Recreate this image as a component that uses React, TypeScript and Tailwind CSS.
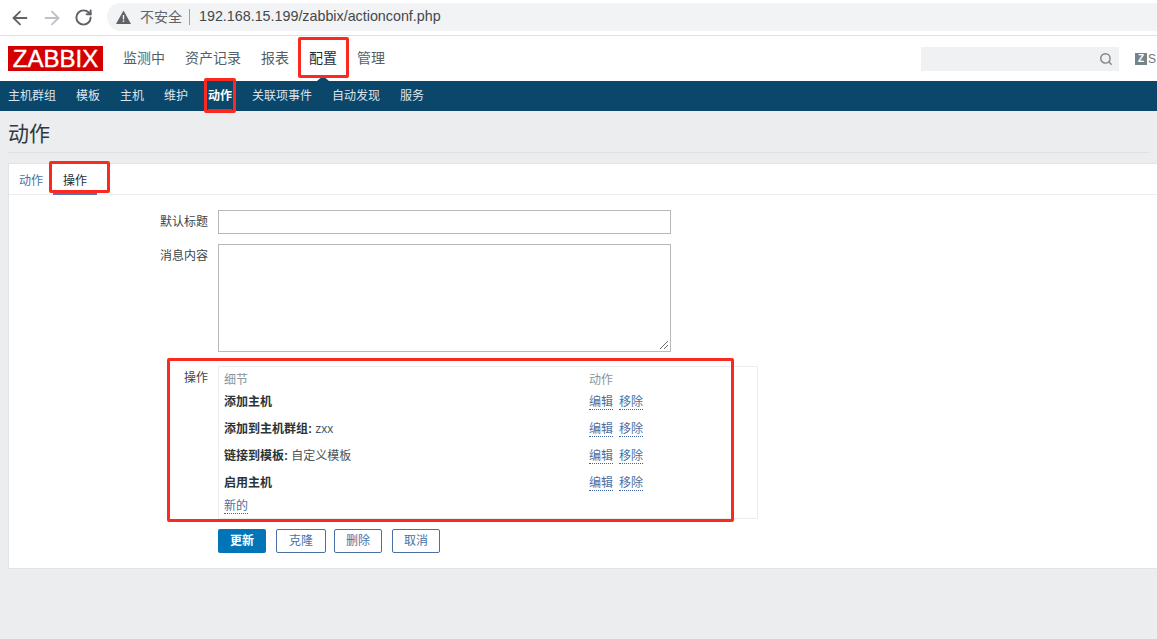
import React from "react";
import { ArrowLeft, ArrowRight, RotateCw, Search } from "lucide-react";

const font = "font-['Liberation_Sans','Noto_Sans_CJK_SC',sans-serif]";

const mainNav = [
  { label: "监测中", w: "w-[42px]" },
  { label: "资产记录", w: "w-[56px]" },
  { label: "报表", w: "w-[28px]" },
  { label: "配置", w: "w-[28px]", active: true },
  { label: "管理", w: "w-[28px]" },
];

const subNav = ["主机群组", "模板", "主机", "维护", "动作", "关联项事件", "自动发现", "服务"];

const ops = [
  { bold: "添加主机", rest: "" },
  { bold: "添加到主机群组:", rest: " zxx" },
  { bold: "链接到模板:", rest: " 自定义模板" },
  { bold: "启用主机", rest: "" },
];

function Link({ children }: { children: React.ReactNode }) {
  return (
    <a className="text-[#4a6fa5] border-b border-dotted border-[#3f62a0] leading-[13px] cursor-pointer">
      {children}
    </a>
  );
}

function RedBox({ className }: { className: string }) {
  return <div className={`absolute border-[3px] border-[#fb2a20] rounded-[2px] pointer-events-none ${className}`} />;
}

export default function App() {
  return (
    <div className={`${font} relative w-[1157px] h-[639px] overflow-hidden bg-[#ebedef] text-[12px] text-[#1f2c33]`}>
      {/* browser bar */}
      <div className="h-[36px] bg-white border-b border-[#dfe1e3] flex items-center">
        <div className="w-[107px] pl-[9px] flex items-center">
          <ArrowLeft size={22} strokeWidth={2} className="text-[#5f6368]" />
          <ArrowRight size={22} strokeWidth={2} className="text-[#bdc1c6] ml-[10px]" />
          <RotateCw size={19} strokeWidth={2.5} className="text-[#5f6368] ml-[11px]" />
        </div>
        <div className="flex-1 h-[28px] mb-px bg-[#f1f3f4] rounded-l-[14px] flex items-center pl-[9px]">
          <svg width="15" height="14" viewBox="0 0 15 14">
            <path d="M7.5 0.5 15 14H0Z" fill="#5f6368" />
            <path d="M6.8 5h1.4v4.6H6.8ZM6.8 10.6h1.4V12H6.8Z" fill="#f1f3f4" />
          </svg>
          <span className="ml-[9px] text-[14px] text-[#5f6368]">不安全</span>
          <span className="ml-[7px] w-px h-[16px] bg-[#9aa0a6]" />
          <span className="ml-[9px] text-[14.3px] text-[#44484c]">192.168.15.199/zabbix/actionconf.php</span>
        </div>
      </div>

      {/* header */}
      <div className="h-[45px] bg-white flex items-center pl-[8px]">
        <div className="w-[95px] h-[25px] bg-[#d40000] text-white text-[24px] leading-[25px] text-center [-webkit-text-stroke:0.4px_white]">
          ZABBIX
        </div>
        <nav className="ml-[20px] flex gap-[20px] text-[14px] text-[#555f66]">
          {mainNav.map((item) => (
            <span key={item.label} className={`${item.w} whitespace-nowrap ${item.active ? "text-[#1f2c33]" : ""}`}>
              {item.label}
            </span>
          ))}
        </nav>
        <div className="ml-auto flex items-center">
          <div className="w-[198px] h-[24px] bg-[#f0f1f2] flex items-center justify-end pr-[6px]">
            <Search size={14} strokeWidth={2.4} className="text-[#7b868c]" />
          </div>
          <div className="ml-[16px] w-[12px] h-[12px] bg-[#76838a] text-white text-[10px] leading-[12px] font-bold text-center">Z</div>
          <span className="ml-[1px] text-[#6b767c] text-[12px] w-[9px] overflow-hidden">S</span>
        </div>
      </div>

      {/* sub nav */}
      <div className="relative h-[30px] bg-[#0b466b] flex items-center pl-[8px] gap-[20px] text-[#dbe5ec]">
        <span className="absolute left-[317px] -top-[5px] w-0 h-0 border-x-[6px] border-x-transparent border-b-[5px] border-b-[#0b466b]" />
        {subNav.map((s) => (
          <span
            key={s}
            className={`h-full flex items-center whitespace-nowrap ${
              s === "动作" ? "text-white font-bold border-y-2 border-t-transparent border-b-[#0a7cc4]" : ""
            }`}
          >
            {s}
          </span>
        ))}
      </div>

      {/* title */}
      <div className="mx-[8px] h-[42px] border-b border-[#dde1e3] flex items-center">
        <h1 className="text-[21px] text-[#30393e] mt-[4px]">动作</h1>
      </div>

      {/* card */}
      <div className="ml-[8px] mt-[10px] h-[406px] bg-white border border-[#dfe4e7] border-r-0">
        <div className="h-[31px] border-b border-[#ebedef] flex pl-[10px] gap-[20px]">
          <span className="pt-[8px] text-[#4a6fa5]">动作</span>
          <span className="relative pt-[8px]">
            操作
            <span className="absolute -left-[10px] -right-[10px] bottom-[-1px] h-[2px] bg-[#5a70b0]" />
          </span>
        </div>

        <div className="pt-[15px]">
          <div className="flex items-center">
            <label className="w-[199px] text-right text-[#3c4549]">默认标题</label>
            <div className="ml-[10px] w-[453px] h-[24px] border border-[#b5b9bb] bg-white" />
          </div>

          <div className="flex mt-[10px]">
            <label className="w-[199px] text-right pt-[3px] text-[#3c4549]">消息内容</label>
            <div className="relative ml-[10px] w-[453px] h-[108px] border border-[#b5b9bb] bg-white">
              <svg className="absolute right-[1px] bottom-[1px]" width="10" height="10" viewBox="0 0 10 10" stroke="#6b6b6b" strokeWidth="1">
                <path d="M1 9 9 1M5 9l4-4" />
              </svg>
            </div>
          </div>

          <div className="flex mt-[14px]">
            <label className="w-[199px] text-right pt-[3px] text-[#3c4549]">操作</label>
            <div className="ml-[10px] w-[540px] h-[153px] border border-[#ebedef] pl-[5px] pt-[4px]">
              <div className="flex h-[14px] text-[#8a9499]">
                <span className="w-[365px]">细节</span>
                <span>动作</span>
              </div>
              {ops.map((op, i) => (
                <div key={op.bold} className={`flex items-center h-[27px] ${i === 0 ? "mt-[3px]" : ""}`}>
                  <span className="w-[365px] text-[#2b3438]">
                    <b>{op.bold}</b>
                    <span className="text-[#4a555b]">{op.rest}</span>
                  </span>
                  <span className="flex gap-[6px] mt-[2px]">
                    <Link>编辑</Link>
                    <Link>移除</Link>
                  </span>
                </div>
              ))}
              <div className="mt-[1px]">
                <Link>新的</Link>
              </div>
            </div>
          </div>

          <div className="flex ml-[209px] mt-[10px]">
            <button className="w-[48px] h-[24px] bg-[#0275b8] text-white rounded-[2px] font-bold">更新</button>
            <button className="ml-[10px] w-[50px] h-[24px] border border-[#4a6fa5] text-[#4a6fa5] rounded-[2px]">克隆</button>
            <button className="ml-[8px] w-[48px] h-[24px] border border-[#4a6fa5] text-[#4a6fa5] rounded-[2px]">删除</button>
            <button className="ml-[10px] w-[48px] h-[24px] border border-[#4a6fa5] text-[#4a6fa5] rounded-[2px]">取消</button>
          </div>
        </div>
      </div>

      {/* annotation boxes */}
      <RedBox className="left-[298px] top-[37px] w-[51px] h-[41px]" />
      <RedBox className="left-[204px] top-[78px] w-[32px] h-[35px]" />
      <RedBox className="left-[49px] top-[161px] w-[61px] h-[32px]" />
      <RedBox className="left-[167px] top-[358px] w-[567px] h-[164px]" />
    </div>
  );
}
